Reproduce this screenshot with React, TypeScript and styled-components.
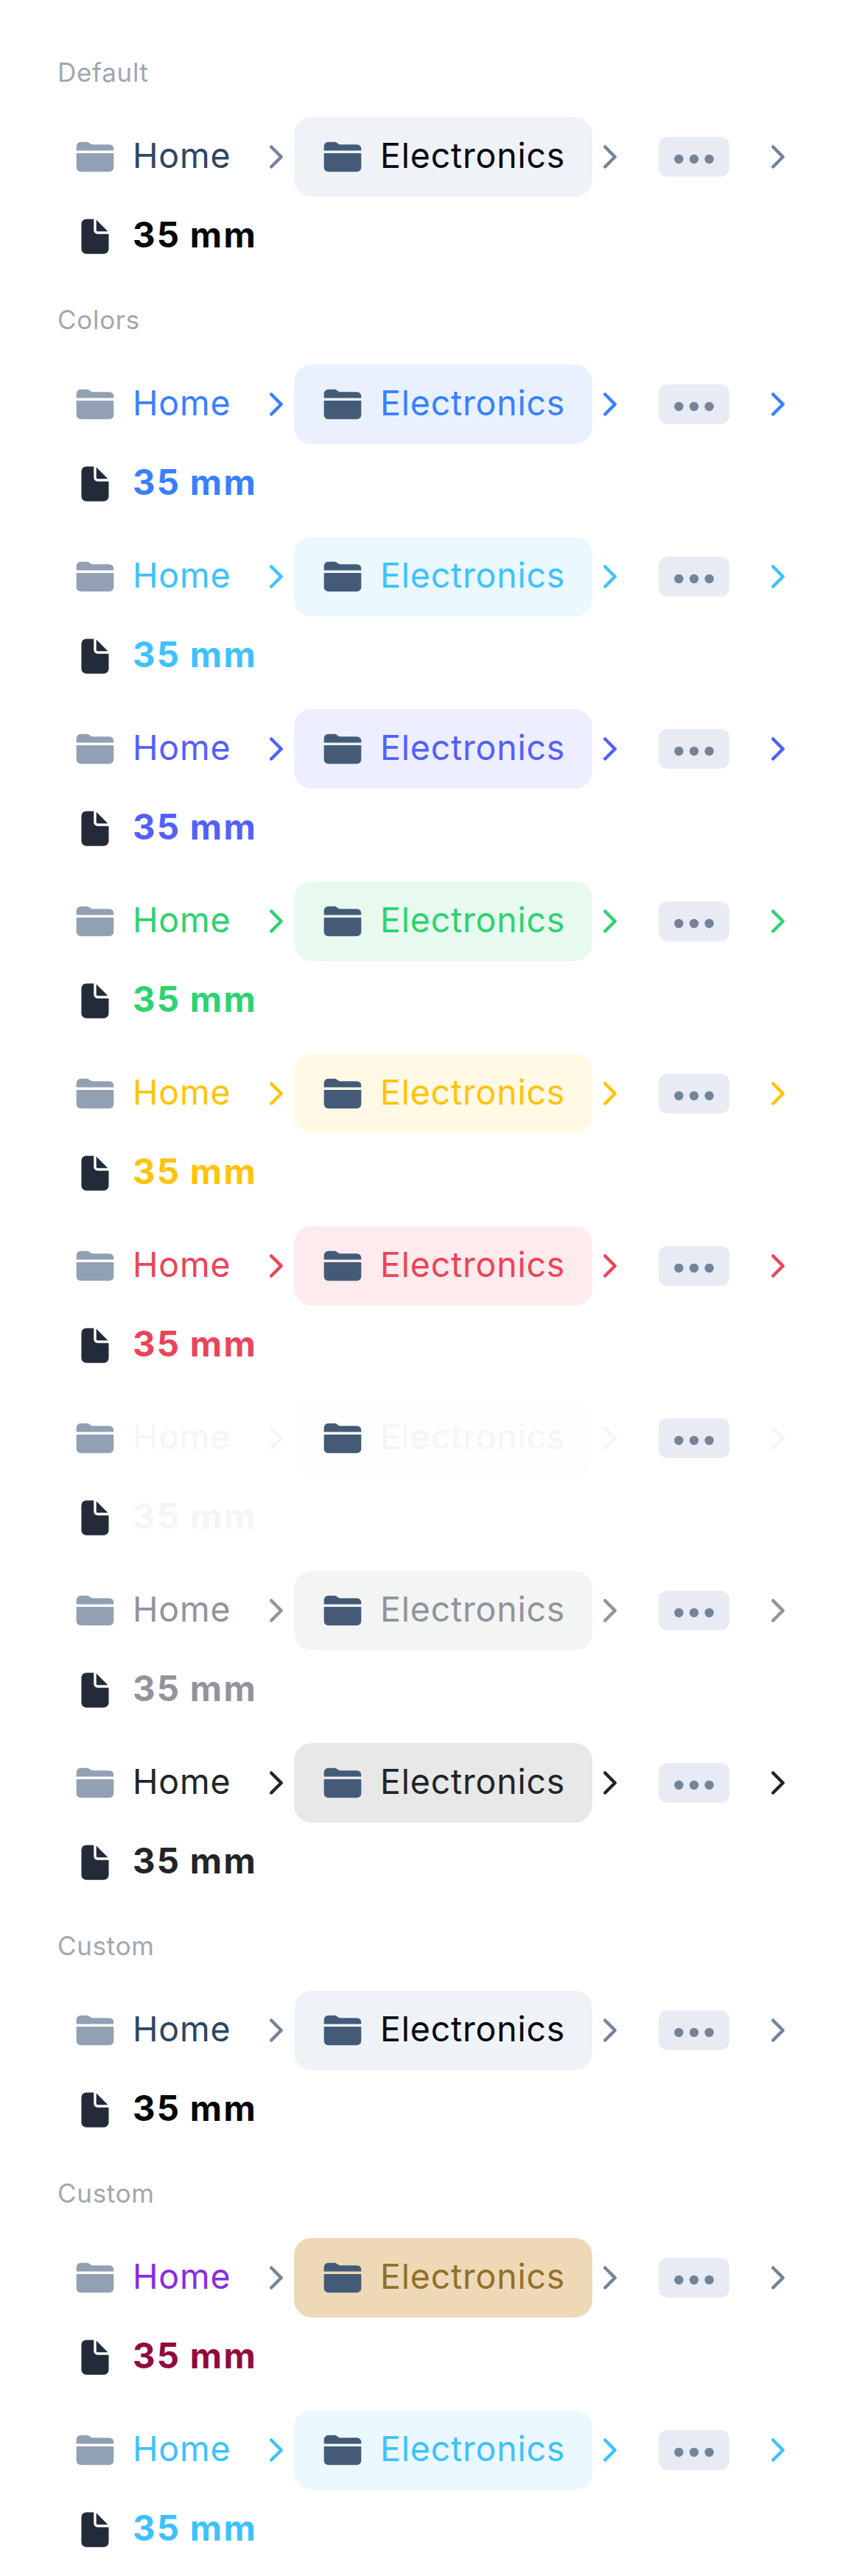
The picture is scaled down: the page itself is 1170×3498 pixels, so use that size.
import React from 'react';
import styled, { createGlobalStyle } from 'styled-components';

const GlobalStyle = createGlobalStyle`
  body {
    margin: 0;
    background: #ffffff;
    font-family: Inter, "Liberation Sans", sans-serif;
  }
`;

const Page = styled.main`
  box-sizing: border-box;
  width: 1170px;
  padding-top: 48px;
`;

const SectionTitle = styled.h2`
  margin: 0;
  padding: 29px 78px 31px;
  font-size: 35px;
  font-weight: 400;
  line-height: 42px;
  letter-spacing: 0.7px;
  color: #a0a7b1;
`;

const Breadcrumbs = styled.nav`
  display: flex;
  flex-wrap: wrap;
  align-items: center;
  padding: 9px 0 9px 63px;
`;

const Crumb = styled.div`
  display: flex;
  align-items: center;
  flex: none;
`;

const CrumbLink = styled.a<{ $color: string; $background?: string }>`
  display: flex;
  align-items: center;
  gap: 24px;
  box-sizing: border-box;
  height: 108px;
  padding: 0 39px;
  border-radius: 24px;
  color: ${(p) => p.$color};
  background: ${(p) => p.$background ?? 'transparent'};
`;

const Label = styled.span<{ $width: number; $bold?: boolean }>`
  width: ${(p) => p.$width}px;
  padding-bottom: 4px;
  font-size: ${(p) => (p.$bold ? 47.5 : 46.5)}px;
  line-height: 68px;
  font-weight: ${(p) => (p.$bold ? 700 : 400)};
  letter-spacing: ${(p) => (p.$bold ? 2.2 : 0.78)}px;
  word-spacing: ${(p) => (p.$bold ? -1 : 0)}px;
  white-space: nowrap;
`;

const Icon = styled.svg<{ $size: number; $color: string }>`
  display: block;
  flex: none;
  width: ${(p) => p.$size}px;
  height: ${(p) => p.$size}px;
  color: ${(p) => p.$color};
`;

const CollapsedButton = styled.button`
  display: flex;
  align-items: center;
  justify-content: center;
  box-sizing: border-box;
  width: 96px;
  height: 54px;
  margin: 0 42px;
  padding: 6px 0 0;
  border: 0;
  border-radius: 12px;
  background: #e8ebf3;
`;

const FolderIcon = ({ color }: { color: string }) => (
  <Icon viewBox="0 0 512 512" fill="currentColor" $size={54} $color={color}>
    <path d="M496 152a56 56 0 00-56-56H220.11a23.89 23.89 0 01-13.31-4L179 73.41A55.77 55.77 0 00147.89 64H72a56 56 0 00-56 56v48a8 8 0 008 8h464a8 8 0 008-8zM16 392a56 56 0 0056 56h368a56 56 0 0056-56V216a8 8 0 00-8-8H24a8 8 0 00-8 8z" />
  </Icon>
);

const DocumentIcon = () => (
  <Icon viewBox="0 0 512 512" fill="currentColor" $size={54} $color="#242b38">
    <path d="M428 224H288a48 48 0 01-48-48V36a4 4 0 00-4-4h-92a64 64 0 00-64 64v320a64 64 0 0064 64h224a64 64 0 0064-64V228a4 4 0 00-4-4z" />
    <path d="M419.22 188.59L275.41 44.78a2 2 0 00-3.41 1.41V176a16 16 0 0016 16h129.81a2 2 0 001.41-3.41z" />
  </Icon>
);

const Separator = ({ color }: { color: string }) => (
  <Icon viewBox="0 0 512 512" fill="none" $size={48} $color={color}>
    <path
      d="M184 112l144 144-144 144"
      stroke="currentColor"
      strokeWidth="48"
      strokeLinecap="round"
      strokeLinejoin="round"
    />
  </Icon>
);

const DotsIcon = () => (
  <Icon viewBox="0 0 512 512" fill="currentColor" $size={66} $color="#73849a">
    <circle cx="96" cy="256" r="48" />
    <circle cx="256" cy="256" r="48" />
    <circle cx="416" cy="256" r="48" />
  </Icon>
);

interface Palette {
  home: string;
  separator: string;
  active: string;
  background: string;
  last: string;
}

const tint = (color: string, background: string): Palette => ({
  home: color,
  separator: color,
  active: color,
  background,
  last: color,
});

const base: Palette = {
  home: '#2d4665',
  separator: '#73849a',
  active: '#03060b',
  background: '#eff3f8',
  last: '#03060b',
};

const secondary = tint('#3dc2ff', '#ebf8ff');

const sections: { title: string; palettes: Palette[] }[] = [
  { title: 'Default', palettes: [base] },
  {
    title: 'Colors',
    palettes: [
      tint('#3880ff', '#e9f1ff'),
      secondary,
      tint('#5260ff', '#edeeff'),
      tint('#2dd36f', '#e8faef'),
      tint('#ffc409', '#fff9e6'),
      tint('#eb445a', '#ffebed'),
      tint('#f4f5f8', '#fdfffe'),
      tint('#92949c', '#f3f5f4'),
      tint('#222428', '#e8e8e8'),
    ],
  },
  { title: 'Custom', palettes: [base] },
  {
    title: 'Custom',
    palettes: [
      { ...base, home: '#8a2be2', active: '#92702c', background: '#eed9b7', last: '#900c3f' },
      secondary,
    ],
  },
];

const Trail = ({ palette }: { palette: Palette }) => (
  <Breadcrumbs>
    <Crumb>
      <CrumbLink $color={palette.home}>
        <FolderIcon color="#92a0b3" />
        <Label $width={132}>Home</Label>
      </CrumbLink>
      <Separator color={palette.separator} />
    </Crumb>
    <Crumb>
      <CrumbLink $color={palette.active} $background={palette.background}>
        <FolderIcon color="#445b78" />
        <Label $width={249}>Electronics</Label>
      </CrumbLink>
      <Separator color={palette.separator} />
    </Crumb>
    <Crumb>
      <CollapsedButton aria-label="Show more breadcrumbs">
        <DotsIcon />
      </CollapsedButton>
      <Separator color={palette.separator} />
    </Crumb>
    <Crumb>
      <CrumbLink $color={palette.last}>
        <DocumentIcon />
        <Label $width={168} $bold>
          35 mm
        </Label>
      </CrumbLink>
    </Crumb>
  </Breadcrumbs>
);

export default function App() {
  return (
    <>
      <GlobalStyle />
      <Page>
        {sections.map((section, i) => (
          <section key={i}>
            <SectionTitle>{section.title}</SectionTitle>
            {section.palettes.map((palette, j) => (
              <Trail key={j} palette={palette} />
            ))}
          </section>
        ))}
      </Page>
    </>
  );
}
